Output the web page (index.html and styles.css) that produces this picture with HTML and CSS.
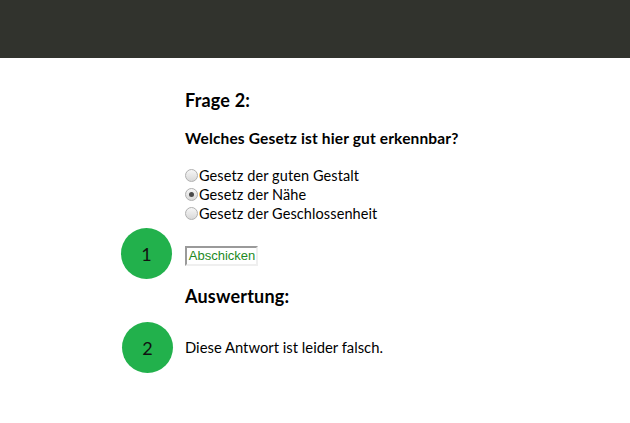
FILE: index.html
```html
<!DOCTYPE html>
<html lang="de">
<head>
<meta charset="utf-8">
<link rel="stylesheet" href="styles.css">
</head>
<body>
<header class="topbar"></header>
<main class="content">
  <h2 class="title">Frage 2:</h2>
  <h3 class="question">Welches Gesetz ist hier gut erkennbar?</h3>
  <div class="options">
    <label class="option"><span class="radio"></span>Gesetz der guten Gestalt</label>
    <label class="option"><span class="radio checked"></span>Gesetz der Nähe</label>
    <label class="option"><span class="radio"></span>Gesetz der Geschlossenheit</label>
  </div>
  <div class="submit-row">
    <span class="badge">1</span>
    <button class="submit">Abschicken</button>
  </div>
  <h2 class="title result-title">Auswertung:</h2>
  <div class="result-row">
    <span class="badge badge-2">2</span>
    <p class="result">Diese Antwort ist leider falsch.</p>
  </div>
</main>
</body>
</html>
```
FILE: styles.css
```css
html, body {
  margin: 0;
  padding: 0;
  background: #ffffff;
}
body {
  font-family: Lato, "Open Sans", sans-serif;
  color: #000;
  min-height: 423px;
}
.topbar {
  height: 58px;
  background: #31332d;
}
.content {
  padding: 32px 0 60px 185px;
}
.title {
  margin: 0;
  font-size: 18px;
  font-weight: 700;
  line-height: 20px;
  letter-spacing: 0.2px;
}
.question {
  margin: 19px 0 0;
  font-size: 15.5px;
  font-weight: 700;
  line-height: 18px;
  letter-spacing: 0.15px;
}
.options {
  margin-top: 19px;
  display: flex;
  flex-direction: column;
}
.option {
  display: flex;
  align-items: center;
  height: 19px;
  line-height: 19px;
  font-size: 14.5px;
  letter-spacing: 0.1px;
}
.radio {
  width: 11px;
  height: 11px;
  border-radius: 50%;
  border: 1px solid #b0b0b0;
  background: linear-gradient(#f6f6f6, #d8d8d8);
  margin: 0 1px 0 0;
  position: relative;
  flex: none;
}
.radio.checked::after {
  content: "";
  position: absolute;
  left: 3px;
  top: 3px;
  width: 5px;
  height: 5px;
  border-radius: 50%;
  background: #4a4a4a;
}
.submit-row {
  position: relative;
  margin-top: 21px;
  height: 20px;
}
.submit {
  width: 73px;
  height: 20px;
  padding: 0 0 0 1px;
  margin: 0;
  font-family: "Liberation Sans", Arial, sans-serif;
  font-size: 13px;
  color: #1d8a24;
  background: #fff;
  border: 2px solid;
  border-color: #9a9a9a #efefef #efefef #9a9a9a;
  line-height: 16px;
}
.badge {
  position: absolute;
  left: -64px;
  top: -16px;
  width: 51px;
  height: 51px;
  border-radius: 50%;
  background: #22b14c;
  font-family: Lato, sans-serif;
  font-size: 18px;
  display: flex;
  align-items: center;
  justify-content: center;
  color: #111;
}
.result-title {
  margin-top: 22px;
}
.result-row {
  position: relative;
  margin-top: 32px;
}
.badge-2 {
  top: -16px;
  left: -63px;
}
.result {
  margin: 0;
  font-size: 14.8px;
  line-height: 18px;
}
```
